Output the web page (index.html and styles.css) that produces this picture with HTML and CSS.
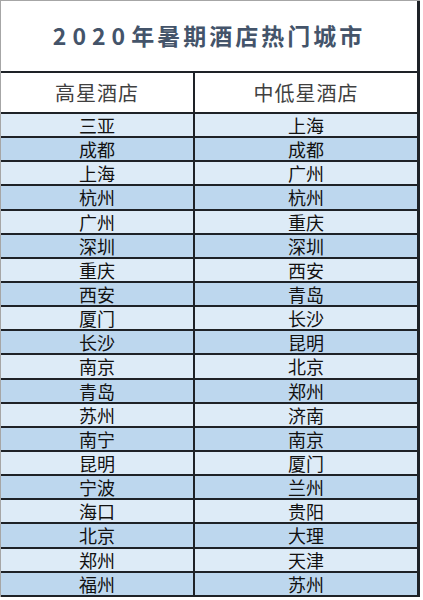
FILE: index.html
```html
<!DOCTYPE html>
<html lang="zh-CN">
<head>
<meta charset="utf-8">
<title>2020年暑期酒店热门城市</title>
<link rel="stylesheet" href="styles.css">
</head>
<body>
<div class="sheet">
  <div class="title"><span class="year">2020</span>年暑期酒店热门城市</div>
  <div class="head">高星酒店</div>
  <div class="head">中低星酒店</div>

  <div class="cell light">三亚</div><div class="cell light">上海</div>
  <div class="cell dark">成都</div><div class="cell dark">成都</div>
  <div class="cell light">上海</div><div class="cell light">广州</div>
  <div class="cell dark">杭州</div><div class="cell dark">杭州</div>
  <div class="cell light">广州</div><div class="cell light">重庆</div>
  <div class="cell dark">深圳</div><div class="cell dark">深圳</div>
  <div class="cell light">重庆</div><div class="cell light">西安</div>
  <div class="cell dark">西安</div><div class="cell dark">青岛</div>
  <div class="cell light">厦门</div><div class="cell light">长沙</div>
  <div class="cell dark">长沙</div><div class="cell dark">昆明</div>
  <div class="cell light">南京</div><div class="cell light">北京</div>
  <div class="cell dark">青岛</div><div class="cell dark">郑州</div>
  <div class="cell light">苏州</div><div class="cell light">济南</div>
  <div class="cell dark">南宁</div><div class="cell dark">南京</div>
  <div class="cell light">昆明</div><div class="cell light">厦门</div>
  <div class="cell dark">宁波</div><div class="cell dark">兰州</div>
  <div class="cell light">海口</div><div class="cell light">贵阳</div>
  <div class="cell dark">北京</div><div class="cell dark">大理</div>
  <div class="cell light">郑州</div><div class="cell light">天津</div>
  <div class="cell dark">福州</div><div class="cell dark">苏州</div>
</div>
</body>
</html>
```
FILE: styles.css
```css
html, body {
  margin: 0;
  padding: 0;
  background: #ffffff;
}

body {
  font-family: "Noto Sans CJK SC", "Noto Sans", sans-serif;
}

.sheet {
  width: 416px;
  display: grid;
  grid-template-columns: 192px 222px;
  grid-template-rows: 70px 39px repeat(20, 22.15px);
  gap: 2px;
  background: #1e2227;
  border-left: 1px solid #a6a6a6;
  border-top: 1px solid #a6a6a6;
  padding: 0 3px 2px 0;
}

.title {
  grid-column: 1 / span 2;
  background: #ffffff;
  color: #44546a;
  font-size: 23px;
  font-weight: 700;
  letter-spacing: 3px;
  display: flex;
  align-items: center;
  justify-content: center;
  padding-bottom: 2px;
}

.year {
  letter-spacing: 6px;
}

.head {
  background: #ffffff;
  color: #404040;
  font-size: 20px;
  letter-spacing: 1px;
  display: flex;
  align-items: center;
  justify-content: center;
}

.cell {
  color: #111111;
  font-size: 18px;
  line-height: 1;
  display: flex;
  align-items: center;
  justify-content: center;
}

.light {
  background: #ddebf7;
}

.dark {
  background: #bdd7ee;
}
```
